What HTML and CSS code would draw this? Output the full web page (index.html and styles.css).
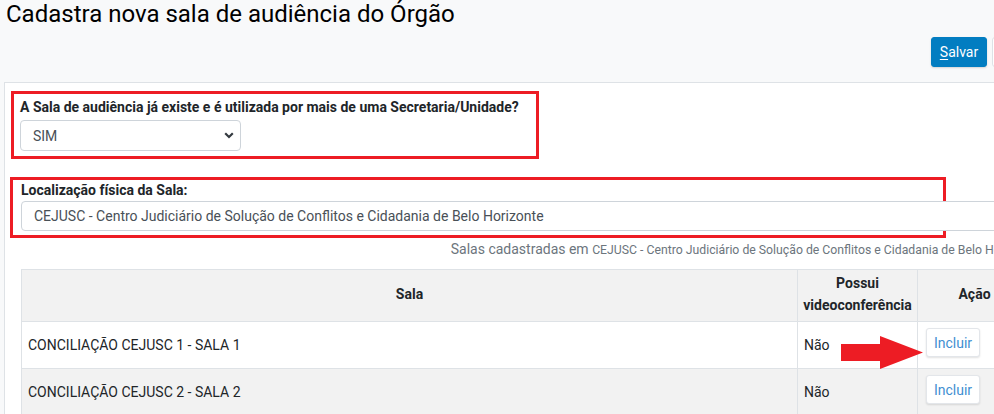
FILE: index.html
```html
<!DOCTYPE html>
<html lang="pt-BR">
<head>
<meta charset="utf-8">
<title>Cadastra nova sala de audiência do Órgão</title>
<link rel="stylesheet" href="styles.css">
</head>
<body>
<div class="page">
  <h1 class="title">Cadastra nova sala de audiência do Órgão</h1>
  <div class="toolbar">
    <button class="btn btn-primary" type="button"><u>S</u>alvar</button>
    <button class="btn btn-light" type="button">Voltar</button>
  </div>
  <div class="card">
    <div class="hl hl-1">
      <label class="lbl" for="existe">A Sala de audiência já existe e é utilizada por mais de uma Secretaria/Unidade?</label>
      <div class="select-wrap">
        <select id="existe" class="select">
          <option>SIM</option>
          <option>NÃO</option>
        </select>
        <svg class="chev" width="10" height="7" viewBox="0 0 10 7"><path d="M1.2 1.3 L5 5 L8.8 1.3" fill="none" stroke="#343a40" stroke-width="2.2"/></svg>
      </div>
    </div>
    <div class="hl hl-2">
      <label class="lbl" for="local">Localização física da Sala:</label>
      <input id="local" class="input" type="text" value="CEJUSC - Centro Judiciário de Solução de Conflitos e Cidadania de Belo Horizonte">
    </div>
    <div class="caption">Salas cadastradas em <small class="org">CEJUSC - Centro Judiciário de Solução de Conflitos e Cidadania de Belo Horizonte</small></div>
    <div class="table-area">
      <table class="tbl">
        <thead>
          <tr>
            <th class="c-sala">Sala</th>
            <th class="c-video">Possui videoconferência</th>
            <th class="c-acao">Ação</th>
          </tr>
        </thead>
        <tbody>
          <tr>
            <td>CONCILIAÇÃO CEJUSC 1 - SALA 1</td>
            <td>Não</td>
            <td class="act"><button class="btn btn-inc" type="button">Incluir</button></td>
          </tr>
          <tr class="alt">
            <td>CONCILIAÇÃO CEJUSC 2 - SALA 2</td>
            <td>Não</td>
            <td class="act"><button class="btn btn-inc" type="button">Incluir</button></td>
          </tr>
        </tbody>
      </table>
      <svg class="arrow" width="84" height="34" viewBox="0 0 84 34"><path d="M1 8 H40 V0 L83 16.5 L40 33 V25 H1 Z" fill="#ed1c24"/></svg>
    </div>
  </div>
</div>
</body>
</html>
```
FILE: styles.css
```css
* { box-sizing: border-box; }
html, body { margin: 0; padding: 0; }
body {
  background: #f8f9fa;
  font-family: Roboto, "Liberation Sans", Arial, sans-serif;
  font-size: 14px;
  color: #212529;
  overflow: hidden;
  width: 994px;
  height: 414px;
}
.page {
  width: 1052px;
  padding: 0 4px;
}
.title {
  margin: 0;
  padding-left: 2px;
  font-size: 24px;
  font-weight: 400;
  line-height: 29px;
  color: #000;
}
.toolbar {
  display: flex;
  justify-content: flex-end;
  gap: 5px;
  margin-top: 8px;
}
.btn {
  font-family: inherit;
  font-size: 14px;
  line-height: 20px;
  border-radius: 3px;
  cursor: pointer;
}
.btn-primary {
  width: 56px;
  height: 30px;
  padding: 0;
  background: #027dc1;
  color: #fff;
  border: 1px solid #027dc1;
  box-shadow: 0 1px 2px rgba(0,0,0,.15);
}
.btn-primary u { text-decoration-thickness: 1px; text-underline-offset: 2px; }
.btn-light {
  width: 56px;
  height: 30px;
  padding: 0;
  background: #fff;
  color: #212529;
  border: 1px solid #dee2e6;
}
.card {
  margin-top: 15px;
  background: #fff;
  border: 1px solid #dee2e6;
  padding: 8px 9px 40px 6px;
  min-height: 400px;
}
.hl {
  border: 3px solid #ed1c24;
}
.hl-1 {
  width: 528px;
  padding: 3px 6px 5px 6px;
}
.hl-2 {
  width: 936px;
  margin-top: 18px;
  margin-left: -1px;
  padding: 0 6px 4px 8px;
}
.lbl {
  display: block;
  font-weight: 700;
  line-height: 20px;
  margin-bottom: 3px;
  color: #212529;
}
.hl-2 .lbl { margin-bottom: 1px; }
.select-wrap {
  position: relative;
  width: 221px;
}
.select {
  display: block;
  width: 221px;
  height: 31px;
  padding: 0 24px 0 12px;
  font-family: inherit;
  font-size: 14px;
  color: #495057;
  background: #fff;
  border: 1px solid #ced4da;
  border-radius: 4px;
  -webkit-appearance: none;
  appearance: none;
}
.chev {
  position: absolute;
  right: 7px;
  top: 12px;
}
.input {
  display: block;
  width: 1020px;
  height: 30px;
  padding: 0 12px;
  font-family: inherit;
  font-size: 14px;
  color: #495057;
  background: #fff;
  border: 1px solid #ced4da;
  border-radius: 4px;
}
.caption {
  margin-top: 2px;
  text-align: right;
  white-space: nowrap;
  font-size: 14px;
  line-height: 18px;
  color: #6c757d;
}
.org {
  font-size: 12.25px;
}
.table-area {
  position: relative;
  margin-top: 10px;
  margin-left: 10px;
}
.tbl {
  width: 1010px;
  border-collapse: collapse;
  table-layout: fixed;
}
.tbl th, .tbl td {
  border: 1px solid #dee2e6;
}
.tbl thead tr { background: #f2f2f2; }
.tbl th {
  height: 51px;
  padding: 2px 5px 5px;
  font-weight: 700;
  line-height: 22px;
  text-align: center;
  vertical-align: middle;
}
.c-sala { width: 776px; }
.c-video { width: 120px; }
.c-acao { width: 114px; }
.tbl td {
  height: 47px;
  padding: 0 6px;
  line-height: 21px;
  vertical-align: middle;
}
.tbl tr.alt { background: #f2f2f2; }
.tbl td.act {
  vertical-align: top;
  padding: 6px 8px 0;
}
.btn-inc {
  width: 54px;
  height: 29px;
  padding: 0;
  background: #fff;
  color: #3f8fd2;
  border: 1px solid #e3e6ea;
  border-radius: 3px;
  box-shadow: 0 1px 2px rgba(0,0,0,.12);
}
.arrow {
  position: absolute;
  left: 819px;
  top: 67px;
}
```
